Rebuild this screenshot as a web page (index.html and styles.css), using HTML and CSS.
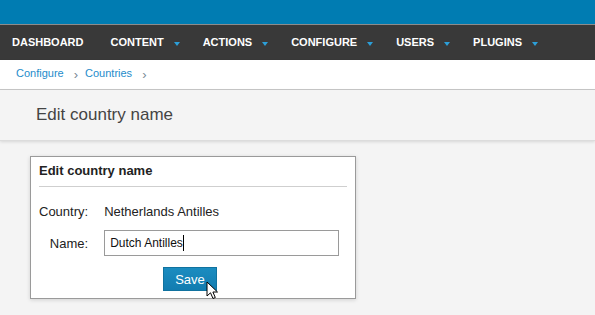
FILE: index.html
```html
<!DOCTYPE html>
<html>
    <head>
        <meta charset="utf-8" />
        <title>Edit country name</title>
        <link rel="stylesheet" href="styles.css">
    </head>
    <body>
        <div class="topbar"></div>
        <ul class="mainnav">
            <li class="first">Dashboard</li>
            <li>Content<span class="caret"></span></li>
            <li>Actions<span class="caret"></span></li>
            <li>Configure<span class="caret"></span></li>
            <li>Users<span class="caret"></span></li>
            <li>Plugins<span class="caret"></span></li>
        </ul>
        <div class="breadcrumb">
            <a href="#">Configure</a><span class="sep">&rsaquo;</span>
            <a href="#">Countries</a><span class="sep">&rsaquo;</span>
        </div>
        <h1 class="page-title">Edit country name</h1>
        <div class="content">
            <form class="box">
                <h2>Edit country name</h2>
                <div class="fields">
                    <span class="label">Country:</span>
                    <span class="value">Netherlands Antilles</span>
                    <label class="label" for="name">Name:</label>
                    <div><input id="name" type="text" value="Dutch Antilles" /><span class="text-cursor"></span></div>
                </div>
                <div class="actions">
                    <button type="button" class="btn">Save</button>
                    <svg class="pointer" width="14" height="20" viewBox="0 0 14 20">
                        <path d="M1 1 L1 15 L4.5 11.8 L7 17.5 L9.3 16.5 L6.9 11 L11.5 11 Z" fill="#fff" stroke="#000" stroke-width="1" stroke-linejoin="round"/>
                    </svg>
                </div>
            </form>
        </div>
    </body>
</html>
```

FILE: styles.css
```css
/** Reset **/
html, body, div, span, h1, h2, ul, li, a, form, label, input, button {
  margin: 0;
  padding: 0;
  border: 0;
  font-size: 100%;
  font: inherit;
}
ul {
  list-style: none;
}
*, *:before, *:after {
  box-sizing: border-box;
}

/** Page **/
body {
  font-family: "Liberation Sans", Arial, sans-serif;
  font-size: 13px;
  color: #222;
  background: #f4f4f4;
  line-height: 1;
}

.topbar {
  height: 25px;
  background: #007cb2;
  border-bottom: 1px solid #8c8c8c;
}

.mainnav {
  display: flex;
  height: 35px;
  align-items: center;
  background: #393939;
}
.mainnav li {
  display: flex;
  align-items: center;
  padding: 0 8px 0 15px;
  color: #fff;
  font-size: 11px;
  font-weight: bold;
  text-transform: uppercase;
}
.mainnav li.first {
  padding: 0 12px;
}
.mainnav .caret {
  width: 0;
  height: 0;
  margin-left: 10px;
  margin-top: 2px;
  border-left: 3.5px solid transparent;
  border-right: 3.5px solid transparent;
  border-top: 4px solid #2c9fd8;
}

.breadcrumb {
  display: flex;
  align-items: center;
  height: 30px;
  padding: 0 16px 2px;
  background: #fff;
  border-bottom: 1px solid #c8c8c8;
  box-shadow: 0 1px 2px rgba(0, 0, 0, 0.08);
  font-size: 11px;
}
.breadcrumb a {
  color: #1e8ccb;
  text-decoration: none;
}
.breadcrumb .sep {
  margin: 2px 7px 0 10px;
  color: #7a8a96;
  font-size: 13px;
}

.page-title {
  height: 51px;
  padding: 16px 36px 0;
  background: #f4f4f4;
  border-bottom: 1px solid #dcdcdc;
  box-shadow: 0 1px 3px rgba(0, 0, 0, 0.12);
  color: #444;
  font-size: 17px;
}

.content {
  padding: 15px 30px;
}

.box {
  width: 326px;
  padding: 6px 8px 7px;
  background: #fff;
  border: 1px solid #9a9a9a;
  box-shadow: 0 1px 4px rgba(0, 0, 0, 0.15);
}
.box h2 {
  padding: 0 0 7px;
  line-height: 16px;
  font-weight: bold;
  border-bottom: 1px solid #cfcfcf;
}

.fields {
  display: grid;
  grid-template-columns: auto 1fr;
  column-gap: 16px;
  row-gap: 12px;
  align-items: center;
  margin-top: 18px;
}
.fields .label {
  text-align: right;
}
.fields div {
  display: flex;
  align-items: center;
  position: relative;
}
input {
  width: 235px;
  height: 26px;
  padding: 0 5px;
  border: 1px solid #9a9a9a;
  color: #111;
  font-size: 12px;
}
.text-cursor {
  position: absolute;
  left: 79px;
  top: 5px;
  width: 1px;
  height: 16px;
  background: #000;
}

.actions {
  position: relative;
  display: flex;
  justify-content: center;
  margin-top: 11px;
  padding-right: 6px;
}
.btn {
  width: 54px;
  height: 24px;
  background: linear-gradient(#1b8cc0, #127cb0);
  border: 1px solid #10729f;
  color: #fff;
  font-size: 13px;
}
.pointer {
  position: absolute;
  left: 167px;
  top: 14px;
}
```
